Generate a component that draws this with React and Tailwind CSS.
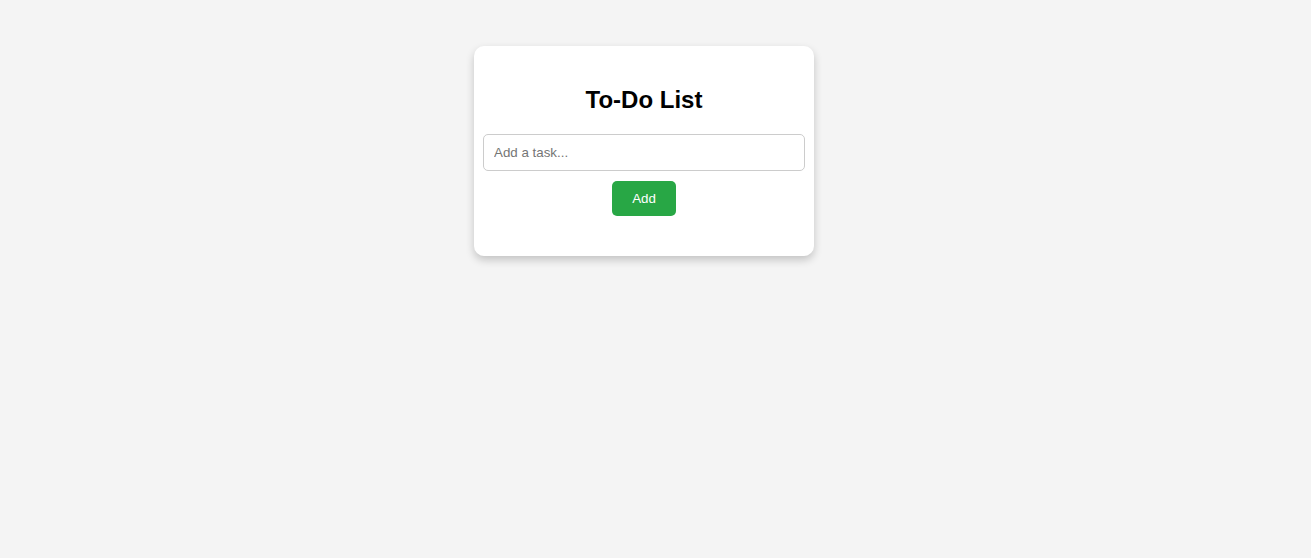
import { useState } from 'react';

export default function App() {
  const [task, setTask] = useState('');

  return (
    <div className="min-h-[558px] bg-[#f4f4f4] pt-[46px] pr-[23px] font-['Liberation_Sans',Arial,sans-serif]">
      <div className="mx-auto w-[340px] rounded-[10px] bg-white p-5 pb-10 text-center shadow-[0_4px_8px_rgba(0,0,0,0.2)]">
        <h2 className="my-5 text-2xl leading-7 font-bold text-black">To-Do List</h2>

        <input
          type="text"
          value={task}
          onChange={(e) => setTask(e.target.value)}
          placeholder="Add a task..."
          className="-mx-[11px] block w-[322px] rounded-[5px] border border-[#ccc] px-2.5 py-2.5 text-[13.33px] leading-[15px] text-black placeholder:text-[#757575] focus:outline-none"
        />

        <button className="mt-2.5 rounded-[5px] bg-[#28a745] px-5 py-2.5 text-[13.33px] leading-[15px] text-white">
          Add
        </button>
      </div>
    </div>
  );
}
